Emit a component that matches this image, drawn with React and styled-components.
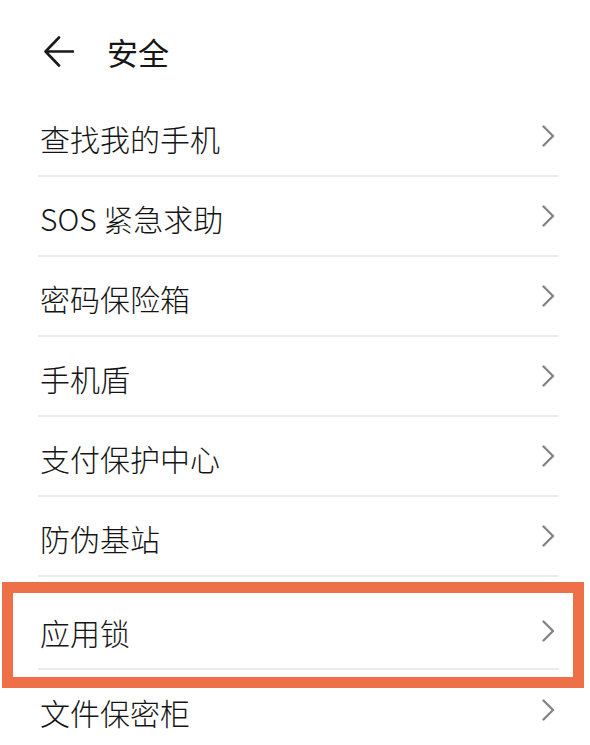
import React from "react";
import styled, { createGlobalStyle } from "styled-components";

const Global = createGlobalStyle`
  html, body {
    margin: 0;
    padding: 0;
    background: #ffffff;
  }
  body {
    font-family: "Noto Sans CJK SC", "Noto Sans", sans-serif;
    color: #1a1a1a;
    overflow: hidden;
  }
`;

const Page = styled.div`
  width: 590px;
  height: 745px;
  background: #ffffff;
  overflow: hidden;
`;

const Header = styled.header`
  height: 97px;
  box-sizing: border-box;
  padding: 5px 0 0 44px;
  display: flex;
  align-items: center;
`;

const BackButton = styled.button`
  width: 30px;
  height: 31px;
  padding: 0;
  border: none;
  background: none;
  display: flex;
  align-items: center;
  justify-content: center;
  cursor: pointer;
`;

const Title = styled.h1`
  margin: 0 0 0 33px;
  font-size: 31px;
  font-weight: 400;
  color: #161616;
  line-height: 1;
`;

const List = styled.ul`
  list-style: none;
  margin: 0;
  padding: 0 31px 0 38px;
`;

const Row = styled.li`
  position: relative;
  box-sizing: border-box;
  height: ${(p) => p.$height || 80}px;
  padding-top: ${(p) => p.$offset || 0}px;
  display: flex;
  align-items: center;
  justify-content: space-between;
  border-bottom: ${(p) => (p.$last ? "none" : "2px solid #ebebeb")};
  padding-left: 2px;
  padding-right: 4px;

  ${(p) =>
    p.$highlight &&
    `
    &::after {
      content: "";
      position: absolute;
      left: -36px;
      right: -25px;
      top: 5px;
      height: 106px;
      box-sizing: border-box;
      border: 11px solid #ee7048;
      pointer-events: none;
    }
  `}
`;

const Label = styled.span`
  font-size: 30px;
  font-weight: 300;
  line-height: 1;
  color: #141414;
  padding-top: 3px;
`;

const Chevron = () => (
  <svg width="13" height="22" viewBox="0 0 13 22" fill="none">
    <path
      d="M1.5 1.5 L11 11 L1.5 20.5"
      stroke="#858585"
      strokeWidth="2.4"
      strokeLinecap="round"
      strokeLinejoin="round"
    />
  </svg>
);

const BackArrow = () => (
  <svg width="30" height="31" viewBox="0 0 30 31" fill="none">
    <path
      d="M29 15.5 H2 M15 1.5 L1.5 15.5 L15 29.5"
      stroke="#1a1a1a"
      strokeWidth="2.6"
      strokeLinecap="round"
      strokeLinejoin="round"
    />
  </svg>
);

const items = [
  { label: "查找我的手机" },
  { label: "SOS 紧急求助" },
  { label: "密码保险箱" },
  { label: "手机盾" },
  { label: "支付保护中心" },
  { label: "防伪基站" },
  { label: "应用锁", height: 93, offset: 16, highlight: true },
  { label: "文件保密柜", last: true },
];

export default function App() {
  return (
    <Page>
      <Global />
      <Header>
        <BackButton aria-label="返回">
          <BackArrow />
        </BackButton>
        <Title>安全</Title>
      </Header>
      <List>
        {items.map((it) => (
          <Row
            key={it.label}
            $height={it.height}
            $offset={it.offset}
            $highlight={it.highlight}
            $last={it.last}
          >
            <Label>{it.label}</Label>
            <Chevron />
          </Row>
        ))}
      </List>
    </Page>
  );
}
